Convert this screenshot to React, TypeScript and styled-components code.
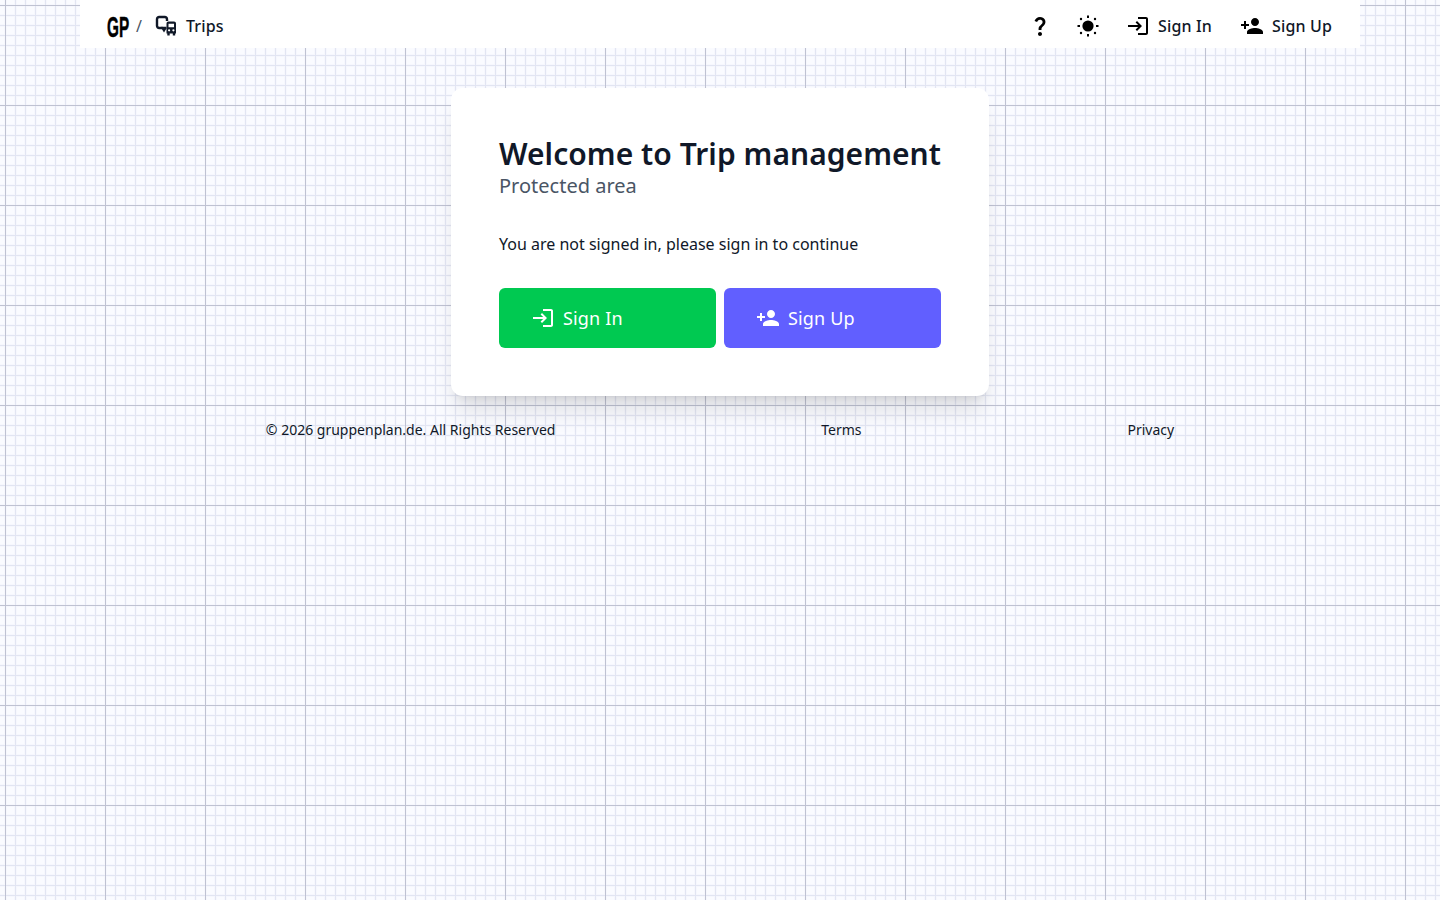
import React from "react";
import styled, { createGlobalStyle } from "styled-components";
import { MdLogin, MdPersonAdd, MdQuestionMark } from "react-icons/md";

const GlobalStyle = createGlobalStyle`
  html, body {
    margin: 0;
    min-height: 100%;
  }

  body {
    font-family: "Noto Sans", sans-serif;
    color: #101828;
    background-color: #fafbff;
    background-image:
      linear-gradient(to right, #bfc2d2 1px, transparent 1px),
      linear-gradient(to bottom, #bfc2d2 1px, transparent 1px),
      linear-gradient(to right, #e2e5f2 1px, transparent 1px),
      linear-gradient(to bottom, #e2e5f2 1px, transparent 1px),
      linear-gradient(to right, #f6f7fd 3px, transparent 3px),
      linear-gradient(to bottom, #f6f7fd 3px, transparent 3px);
    background-size: 100px 100px, 100px 100px, 10px 10px, 10px 10px, 10px 10px, 10px 10px;
    background-position: 5px 5px, 5px 5px, 5px 5px, 5px 5px, 4px 4px, 4px 4px;
  }
`;

const Page = styled.div`
  min-height: 900px;
  display: flex;
  flex-direction: column;
  align-items: center;
`;

const Header = styled.header`
  width: 1280px;
  height: 48px;
  box-sizing: border-box;
  padding: 4px 28px 0 27px;
  display: flex;
  align-items: center;
  justify-content: space-between;
  background: #fff;
`;

const Crumbs = styled.nav`
  display: flex;
  align-items: center;
`;

const Logo = styled.span`
  display: inline-block;
  width: 23px;
  padding-top: 1px;
  font-family: "Liberation Sans", sans-serif;
  font-size: 24px;
  font-weight: 700;
  line-height: 24px;
  color: #000;
  -webkit-text-stroke: 0.4px #000;
  transform: scale(0.64, 1.2);
  transform-origin: left center;
  white-space: nowrap;
`;

const Slash = styled.span`
  margin: 0 12px 0 6px;
  font-size: 16px;
  color: #4a5565;
`;

const CrumbLink = styled.a`
  display: flex;
  align-items: center;
  gap: 8px;
  font-size: 16px;
  font-weight: 500;
  letter-spacing: 0.15px;
  color: #101828;
`;

const Actions = styled.div`
  display: flex;
  align-items: center;
`;

const IconButton = styled.button`
  width: 24px;
  height: 24px;
  margin-right: 24px;
  padding: 0;
  display: flex;
  align-items: center;
  justify-content: center;
  background: none;
  border: 0;
  color: #000;
  font-size: 24px;
`;

const NavLink = styled.a<{ $gap?: number }>`
  display: flex;
  align-items: center;
  gap: 8px;
  margin-left: ${(props) => props.$gap ?? 0}px;
  font-size: 16px;
  font-weight: 500;
  letter-spacing: 0.15px;
  color: #101828;

  & > svg {
    color: #000;
    font-size: 24px;
  }
`;

const Main = styled.main`
  margin-top: 40px;
  width: 538px;
  box-sizing: border-box;
  padding: 48px;
  background: #fff;
  border-radius: 12px;
  box-shadow: 0 20px 25px -5px rgba(0, 0, 0, 0.1), 0 8px 10px -6px rgba(0, 0, 0, 0.1);
`;

const Title = styled.h1`
  margin: 0;
  font-size: 30px;
  font-weight: 600;
  line-height: 36px;
  letter-spacing: 0.04px;
  white-space: nowrap;
  color: #101828;
`;

const Subtitle = styled.h2`
  margin: 0;
  font-size: 20px;
  font-weight: 400;
  line-height: 28px;
  color: #4a5565;
`;

const Message = styled.p`
  margin: 32px 0 0;
  font-size: 16px;
  line-height: 24px;
  color: #101828;
`;

const ButtonRow = styled.div`
  margin-top: 32px;
  display: grid;
  grid-template-columns: 1fr 1fr;
  gap: 8px;
`;

const ActionButton = styled.a<{ $color: string }>`
  height: 60px;
  box-sizing: border-box;
  padding: 0 32px;
  display: flex;
  align-items: center;
  gap: 8px;
  border-radius: 6px;
  background: ${(props) => props.$color};
  color: #fff;
  font-size: 18px;
  letter-spacing: 0.15px;

  & > svg {
    font-size: 24px;
  }
`;

const Footer = styled.footer`
  width: 100%;
  margin-top: 24px;
  display: flex;
  justify-content: space-evenly;
  font-size: 14px;
  line-height: 20px;
  color: #101828;
`;

const TripsIcon = () => (
  <svg width="24" height="24" viewBox="0 0 24 24" fill="none">
    <path
      d="M13 7V5.2C13 3.9 12.1 3 10.8 3H5.2C3.9 3 3 3.9 3 5.2V11.8C3 13.1 3.9 14 5.2 14H8.5"
      stroke="currentColor"
      strokeWidth="2.4"
    />
    <path d="M7.5 12.8H12.5V14.5L10 18.5L7.5 14.5Z" fill="currentColor" />
    <path
      fillRule="evenodd"
      clipRule="evenodd"
      d="M14.5 7.5H20C21.2 7.5 22 8.3 22 9.5V19.5H21.2V21.5H18.8V19.5H15.7V21.5H13.3V19.5H12.5V9.5C12.5 8.3 13.3 7.5 14.5 7.5ZM14.5 9.7V13.2H20V9.7H14.5ZM15.1 15.2A1.1 1.1 0 1 0 15.1 17.4A1.1 1.1 0 1 0 15.1 15.2ZM19.4 15.2A1.1 1.1 0 1 0 19.4 17.4A1.1 1.1 0 1 0 19.4 15.2Z"
      fill="currentColor"
    />
  </svg>
);

const SunIcon = () => (
  <svg width="24" height="24" viewBox="0 0 24 24" fill="currentColor">
    <circle cx="12" cy="12" r="5.6" />
    <rect x="11" y="1.5" width="2" height="2.5" />
    <rect x="11" y="20" width="2" height="2.5" />
    <rect x="1.5" y="11" width="2.5" height="2" />
    <rect x="20" y="11" width="2.5" height="2" />
    <circle cx="5" cy="5" r="1.2" />
    <circle cx="19" cy="5" r="1.2" />
    <circle cx="5" cy="19" r="1.2" />
    <circle cx="19" cy="19" r="1.2" />
  </svg>
);

const App = () => {
  return (
    <Page>
      <GlobalStyle />
      <Header>
        <Crumbs>
          <Logo>GP</Logo>
          <Slash>/</Slash>
          <CrumbLink>
            <TripsIcon />
            Trips
          </CrumbLink>
        </Crumbs>
        <Actions>
          <IconButton>
            <MdQuestionMark />
          </IconButton>
          <IconButton>
            <SunIcon />
          </IconButton>
          <NavLink $gap={2}>
            <MdLogin />
            Sign In
          </NavLink>
          <NavLink $gap={28}>
            <MdPersonAdd />
            Sign Up
          </NavLink>
        </Actions>
      </Header>
      <Main>
        <Title>Welcome to Trip management</Title>
        <Subtitle>Protected area</Subtitle>
        <Message>You are not signed in, please sign in to continue</Message>
        <ButtonRow>
          <ActionButton $color="#00c951">
            <MdLogin />
            Sign In
          </ActionButton>
          <ActionButton $color="#615fff">
            <MdPersonAdd />
            Sign Up
          </ActionButton>
        </ButtonRow>
      </Main>
      <Footer>
        <span>© 2026 gruppenplan.de. All Rights Reserved</span>
        <span>Terms</span>
        <span>Privacy</span>
      </Footer>
    </Page>
  );
};

export default App;
